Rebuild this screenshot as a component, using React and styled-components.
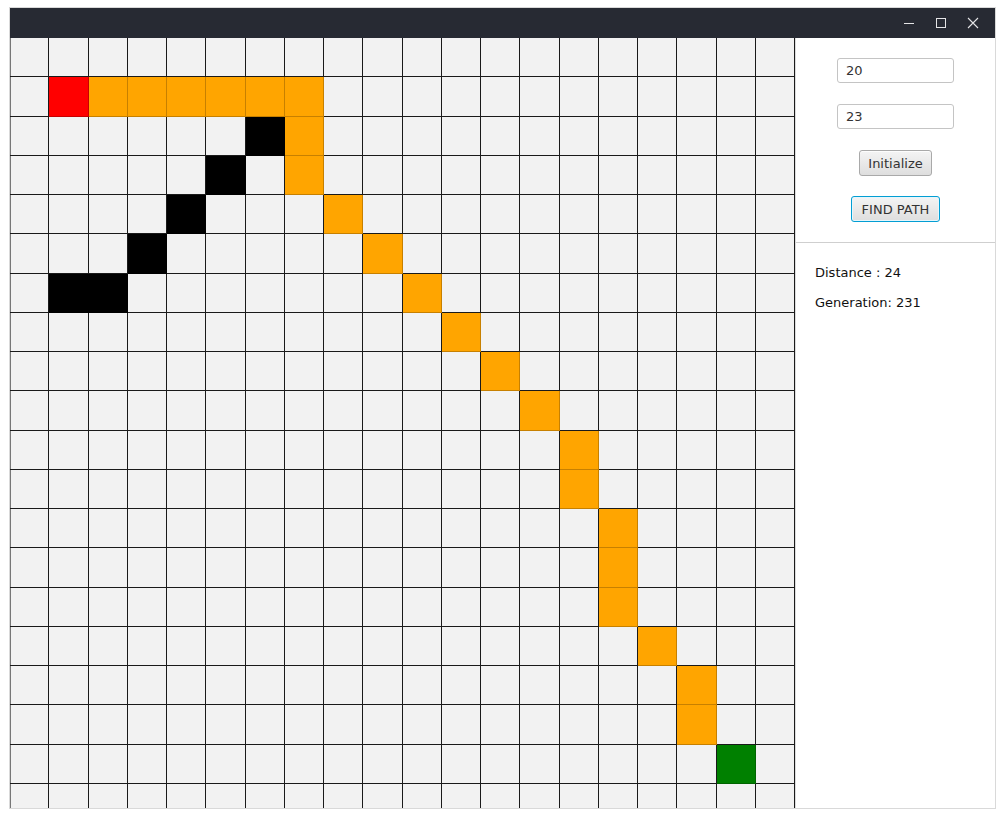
import React from "react"
import styled, { createGlobalStyle } from "styled-components"

const GlobalStyle = createGlobalStyle`
  html, body {
    margin: 0;
    padding: 0;
    background: #ffffff;
  }
  body {
    font-family: "DejaVu Sans", "Liberation Sans", sans-serif;
  }
`

const CELL = 39.25
const COLS = 20
const ROWS = 20

// row -> { col: kind }
const marks = {
  1: { 1: "start", 2: "path", 3: "path", 4: "path", 5: "path", 6: "path", 7: "path" },
  2: { 6: "wall", 7: "path" },
  3: { 5: "wall", 7: "path" },
  4: { 4: "wall", 8: "path" },
  5: { 3: "wall", 9: "path" },
  6: { 1: "wall", 2: "wall", 10: "path" },
  7: { 11: "path" },
  8: { 12: "path" },
  9: { 13: "path" },
  10: { 14: "path" },
  11: { 14: "path" },
  12: { 15: "path" },
  13: { 15: "path" },
  14: { 15: "path" },
  15: { 16: "path" },
  16: { 17: "path" },
  17: { 17: "path" },
  18: { 18: "goal" },
}

const fills = {
  empty: "#f2f2f2",
  start: "#ff0000",
  path: "#ffa500",
  wall: "#000000",
  goal: "#008000",
}

const Page = styled.div`
  padding: 7px 0 0 9px;
`

const Window = styled.div`
  width: 985px;
  height: 800px;
  border: 1px solid #d9d9d9;
  display: flex;
  flex-direction: column;
  background: #ffffff;
`

const TitleBar = styled.div`
  height: 30px;
  background: #272a33;
  display: flex;
  justify-content: flex-end;
  align-items: center;
  padding-right: 12px;
  gap: 12px;
`

const WinButton = styled.div`
  width: 20px;
  height: 20px;
  display: flex;
  align-items: center;
  justify-content: center;
  svg {
    display: block;
  }
`

const Body = styled.div`
  flex: 1;
  display: flex;
  min-height: 0;
`

const Board = styled.div`
  width: ${CELL * COLS}px;
  height: 770px;
  overflow: hidden;
  flex-shrink: 0;
`

const Grid = styled.div`
  display: grid;
  grid-template-columns: repeat(${COLS}, ${CELL}px);
  grid-auto-rows: ${CELL}px;
`

const Cell = styled.div`
  box-sizing: border-box;
  background: ${(p) => fills[p.$kind]};
  border-right: 1px solid ${(p) => (p.$kind === "empty" ? "#1a1a1a" : "rgba(0,0,0,0.22)")};
  border-bottom: 1px solid ${(p) => (p.$kind === "empty" ? "#1a1a1a" : "rgba(0,0,0,0.22)")};
  box-shadow: ${(p) => (p.$first ? "inset 1px 0 0 #777" : "none")};
`

const Side = styled.div`
  flex: 1;
  display: flex;
  flex-direction: column;
  border-left: 1px solid #dcdcdc;
`

const Controls = styled.div`
  display: flex;
  flex-direction: column;
  align-items: center;
  padding: 20px 0 20px;
  gap: 21px;
  border-bottom: 1px solid #cfcfcf;
`

const Field = styled.input`
  box-sizing: border-box;
  width: 117px;
  height: 25px;
  border: 1px solid #c4c4c4;
  border-radius: 3px;
  padding: 0 8px;
  font-family: "DejaVu Sans", sans-serif;
  font-size: 13px;
  color: #333;
  background: #fff;
  outline: none;
`

const Button = styled.button`
  box-sizing: border-box;
  height: 26px;
  padding: 0 ${(p) => (p.$focused ? 10 : 8)}px;
  margin-top: ${(p) => (p.$focused ? -1 : 0)}px;
  border-radius: 3px;
  border: 1px solid ${(p) => (p.$focused ? "#039ed3" : "#a9a9a9")};
  box-shadow: ${(p) => (p.$focused ? "inset 0 0 0 1px #e6f6fc" : "inset 0 1px 0 #fdfdfd")};
  background: linear-gradient(#f4f4f4, #dedede);
  font-family: "DejaVu Sans", sans-serif;
  font-size: 13px;
  color: #333;
`

const Stats = styled.div`
  display: flex;
  flex-direction: column;
  gap: 14px;
  padding: 22px 19px;
`

const Stat = styled.div`
  font-size: 13px;
  line-height: 16px;
  color: #111;
`

function Minimize() {
  return (
    <svg width="12" height="12" viewBox="0 0 12 12">
      <line x1="1" y1="6.5" x2="11" y2="6.5" stroke="#e4e4e6" strokeWidth="1" />
    </svg>
  )
}

function Maximize() {
  return (
    <svg width="12" height="12" viewBox="0 0 12 12">
      <rect x="1.5" y="1.5" width="9" height="9" fill="none" stroke="#e4e4e6" strokeWidth="1" />
    </svg>
  )
}

function Close() {
  return (
    <svg width="12" height="12" viewBox="0 0 12 12">
      <path d="M1 1 L11 11 M11 1 L1 11" stroke="#e4e4e6" strokeWidth="1.1" />
    </svg>
  )
}

export default function App() {
  const cells = []
  for (let r = 0; r < ROWS; r++) {
    for (let c = 0; c < COLS; c++) {
      const kind = (marks[r] && marks[r][c]) || "empty"
      cells.push(<Cell key={`${r}-${c}`} $kind={kind} $first={c === 0} />)
    }
  }

  return (
    <>
      <GlobalStyle />
      <Page>
        <Window>
          <TitleBar>
            <WinButton><Minimize /></WinButton>
            <WinButton><Maximize /></WinButton>
            <WinButton><Close /></WinButton>
          </TitleBar>
          <Body>
            <Board>
              <Grid>{cells}</Grid>
            </Board>
            <Side>
              <Controls>
                <Field defaultValue="20" />
                <Field defaultValue="23" />
                <Button>Initialize</Button>
                <Button $focused>FIND PATH</Button>
              </Controls>
              <Stats>
                <Stat>Distance : 24</Stat>
                <Stat>Generation: 231</Stat>
              </Stats>
            </Side>
          </Body>
        </Window>
      </Page>
    </>
  )
}
